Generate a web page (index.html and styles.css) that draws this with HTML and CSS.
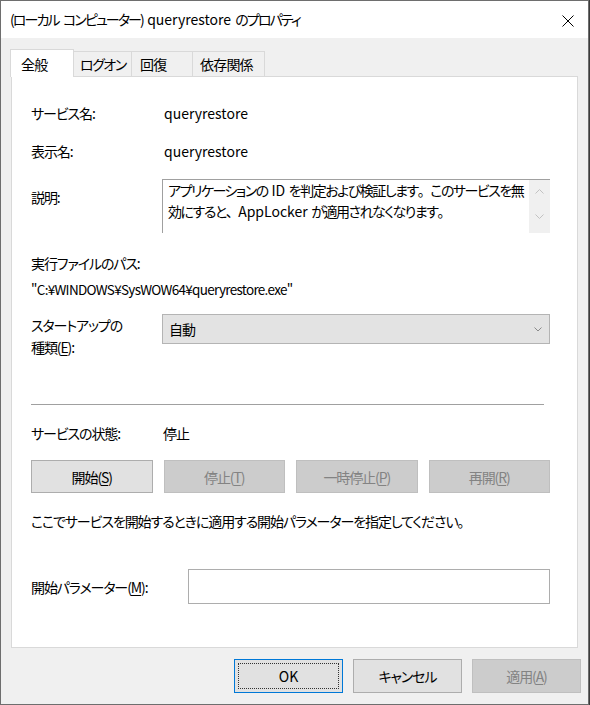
FILE: index.html
```html
<!DOCTYPE html>
<html lang="ja">
<head>
  <meta charset="UTF-8" />
  <title>(ローカル コンピューター) queryrestore のプロパティ</title>
  <link rel="stylesheet" href="styles.css">
</head>
<body>
  <div class="window">
    <div class="titlebar">
      <span class="title">(ローカル コンピューター) <span class="latin">queryrestore</span> のプロパティ</span>
      <div class="close">
        <svg width="12" height="12" viewBox="0 0 12 12"><path d="M0.5 0.5 L11.5 11.5 M11.5 0.5 L0.5 11.5" stroke="#000" stroke-width="1" fill="none"/></svg>
      </div>
    </div>

    <div class="tabs">
      <div class="tab active">全般</div>
      <div class="tab tab-logon">ログオン</div>
      <div class="tab tab-recovery">回復</div>
      <div class="tab tab-deps">依存関係</div>
    </div>

    <div class="panel">
      <div class="row">
        <span class="label">サービス名:</span>
        <span class="value latin">queryrestore</span>
      </div>
      <div class="row row-display">
        <span class="label">表示名:</span>
        <span class="value latin">queryrestore</span>
      </div>
      <div class="row row-desc">
        <span class="label label-desc">説明:</span>
        <div class="desc">
          <div class="desc-text">アプリケーションの <span class="latin">ID</span> を判定および検証します<span class="fw">。</span>このサービスを無<br>効にすると<span class="fw">、</span><span class="latin">AppLocker</span> が適用されなくなります<span class="fw">。</span></div>
          <div class="scrollbar">
            <svg width="9" height="5" viewBox="0 0 9 5"><path d="M0.5 4.5 L4.5 0.5 L8.5 4.5" stroke="#c2c2c2" fill="none"/></svg>
            <svg width="9" height="5" viewBox="0 0 9 5"><path d="M0.5 0.5 L4.5 4.5 L8.5 0.5" stroke="#c2c2c2" fill="none"/></svg>
          </div>
        </div>
      </div>
      <div class="line exe-label">実行ファイルのパス:</div>
      <div class="line exe-path latin">"C:¥WINDOWS¥SysWOW64¥queryrestore.exe"</div>
      <div class="row row-startup">
        <span class="label">スタートアップの<br>種類(<u>E</u>):</span>
        <div class="combo">
          <span>自動</span>
          <svg width="8" height="5" viewBox="0 0 8 5"><path d="M0.5 0.5 L4 4 L7.5 0.5" stroke="#8a8a8a" fill="none"/></svg>
        </div>
      </div>

      <div class="separator"></div>

      <div class="row row-status">
        <span class="label">サービスの状態:</span>
        <span class="value">停止</span>
      </div>
      <div class="actions">
        <button class="btn">開始(<u>S</u>)</button>
        <button class="btn" disabled>停止(<u>T</u>)</button>
        <button class="btn" disabled>一時停止(<u>P</u>)</button>
        <button class="btn" disabled>再開(<u>R</u>)</button>
      </div>
      <div class="line hint">ここでサービスを開始するときに適用する開始パラメーターを指定してください<span class="fw">。</span></div>
      <div class="row row-params">
        <span class="label label-params">開始パラメーター(<u>M</u>):</span>
        <div class="input"></div>
      </div>
    </div>

    <div class="footer">
      <button class="btn btn-ok"><span class="latin">OK</span></button>
      <button class="btn btn-cancel">キャンセル</button>
      <button class="btn btn-apply" disabled>適用(<u>A</u>)</button>
    </div>
  </div>
</body>
</html>
```

FILE: styles.css
```css
* {
  box-sizing: border-box;
  margin: 0;
  padding: 0;
}

body {
  background: #3c3c3c;
  font-family: "Noto Sans CJK JP", sans-serif;
  font-size: 14px;
  font-feature-settings: "palt";
  letter-spacing: -1.1px;
  word-spacing: 1px;
  color: #000;
}

u {
  text-underline-offset: 2px;
}

/* latin runs keep their natural spacing */
.latin {
  letter-spacing: 0;
}

/* full-width punctuation inside proportional text */
.fw {
  font-feature-settings: normal;
}

.window {
  width: 589px;
  height: 705px;
  border: 1px solid #6e6e6e;
  background: #f0f0f0;
  display: flex;
  flex-direction: column;
}

/* title bar */
.titlebar {
  height: 37px;
  background: #fff;
  display: flex;
  align-items: center;
  justify-content: space-between;
  padding-left: 9px;
  flex-shrink: 0;
}

.title {
  font-size: 14px;
  line-height: 37px;
  letter-spacing: -1.9px;
  word-spacing: 3px;
}

.title .latin {
  letter-spacing: 0;
}

.close {
  width: 40px;
  height: 37px;
  display: flex;
  align-items: center;
  justify-content: center;
  padding-top: 2px;
}

/* tabs */
.tabs {
  display: flex;
  align-items: flex-end;
  height: 27px;
  margin: 11px 0 0 9px;
  position: relative;
  z-index: 1;
  flex-shrink: 0;
}

.tab {
  height: 25px;
  line-height: 24px;
  padding-left: 6px;
  border-top: 1px solid #d9d9d9;
  border-right: 1px solid #d9d9d9;
  background: #f0f0f0;
  letter-spacing: -1.5px;
}

.tab.active {
  width: 64px;
  height: 28px;
  margin-bottom: -1px;
  padding-left: 10px;
  line-height: 28px;
  border-left: 1px solid #d9d9d9;
  background: #fff;
  letter-spacing: -0.8px;
}

.tab-logon { width: 58px; }
.tab-recovery { width: 61px; padding-left: 8px; letter-spacing: -0.8px; }
.tab-deps { width: 72px; padding-left: 7px; letter-spacing: -0.8px; }

/* general page */
.panel {
  height: 572px;
  margin: 0 10px;
  border: 1px solid #d9d9d9;
  background: #fff;
  padding: 25px 27px 0 19px;
  flex-shrink: 0;
}

.row {
  display: flex;
  align-items: flex-start;
  line-height: 22px;
}

.label {
  width: 131px;
  flex-shrink: 0;
}

.value {
  padding-left: 2px;
}

.line {
  line-height: 22px;
}

.row-display { margin-top: 16px; }

.row-desc { margin-top: 17px; }

.label-desc { padding-top: 7px; }

.desc {
  width: 389px;
  height: 54px;
  display: flex;
  border-top: 1px solid #a0a0a0;
  border-left: 1px solid #a0a0a0;
}

.desc-text {
  flex: 1;
  padding-left: 5px;
  line-height: 21px;
  letter-spacing: -1.5px;
  word-spacing: 2px;
  white-space: nowrap;
}

.scrollbar {
  width: 21px;
  background: #f0f0f0;
  display: flex;
  flex-direction: column;
  align-items: center;
  justify-content: space-between;
  padding: 9px 0 14px;
}

.exe-label { margin-top: 19px; }

.exe-path {
  margin-top: 4px;
  font-size: 13.5px;
  letter-spacing: -0.7px;
}

.row-startup { margin-top: 14px; }

.combo {
  width: 390px;
  height: 30px;
  background: #e3e3e3;
  border: 1px solid #b4b4b4;
  display: flex;
  align-items: center;
  justify-content: space-between;
  padding: 0 7px 0 6px;
}

.separator {
  height: 1px;
  background: #a0a0a0;
  margin: 46px 6px 0 0;
}

.row-status { margin-top: 17px; }

.row-status .value {
  padding-left: 1px;
}

/* buttons */
.btn {
  height: 33px;
  font: inherit;
  letter-spacing: inherit;
  font-feature-settings: inherit;
  color: #000;
  background: #e1e1e1;
  border: 1px solid #adadad;
}

.btn:disabled {
  background: #cccccc;
  border-color: #bfbfbf;
  color: #838383;
}

.actions {
  display: grid;
  grid-template-columns: repeat(4, 1fr);
  column-gap: 11px;
  margin-top: 16px;
}

.hint { margin-top: 17px; }

.row-params {
  margin-top: 37px;
  align-items: center;
}

.label-params { width: 157px; }

.input {
  flex: 1;
  height: 35px;
  border: 1px solid #adadad;
  background: #fff;
}

.footer {
  display: flex;
  justify-content: flex-end;
  gap: 10px;
  padding: 11px 7px 0 0;
}

.footer .btn {
  width: 109px;
  height: 34px;
}

.btn-ok {
  position: relative;
  border-color: #0078d7;
}

.btn-ok::after {
  content: "";
  position: absolute;
  inset: 3px;
  border: 1px dotted #333;
}
```
